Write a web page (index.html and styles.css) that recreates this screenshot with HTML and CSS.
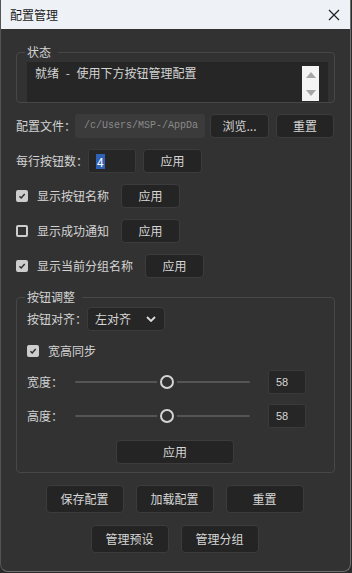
FILE: index.html
```html
<!DOCTYPE html>
<html lang="zh-CN">
<head>
<meta charset="utf-8">
<title>配置管理</title>
<link rel="stylesheet" href="styles.css">
</head>
<body>
<div class="window">
  <div class="titlebar">
    <span class="title">配置管理</span>
    <svg class="close" width="12" height="12" viewBox="0 0 12 12"><path d="M1 1L11 11M11 1L1 11" stroke="#1f1f1f" stroke-width="1.2" fill="none"/></svg>
  </div>
  <div class="content">
    <fieldset class="group group-status">
      <legend>状态</legend>
      <div class="textarea">
        <div class="textarea-text">就绪 - 使用下方按钮管理配置</div>
        <div class="vscroll">
          <svg width="10" height="6" viewBox="0 0 10 6"><path d="M0 6L5 0L10 6Z" fill="#a6a6a6"/></svg>
          <svg width="10" height="6" viewBox="0 0 10 6"><path d="M0 0L5 6L10 0Z" fill="#a6a6a6"/></svg>
        </div>
      </div>
    </fieldset>

    <div class="row row-file">
      <span class="label label-file">配置文件：</span>
      <div class="path-input">/c/Users/MSP-/AppDa</div>
      <button class="btn btn-browse">浏览...</button>
      <button class="btn btn-reset">重置</button>
    </div>

    <div class="row">
      <span class="label label-count">每行按钮数：</span>
      <div class="spin-input"><span class="sel">4</span></div>
      <button class="btn btn-apply">应用</button>
    </div>

    <div class="row">
      <span class="check checked"><svg width="10" height="10" viewBox="0 0 10 10"><path d="M1.8 5.2L4 7.4L8.4 2.6" stroke="#2e2e2e" stroke-width="1.8" fill="none"/></svg></span>
      <span class="label check-label w6">显示按钮名称</span>
      <button class="btn btn-apply">应用</button>
    </div>

    <div class="row">
      <span class="check"></span>
      <span class="label check-label w6">显示成功通知</span>
      <button class="btn btn-apply">应用</button>
    </div>

    <div class="row">
      <span class="check checked"><svg width="10" height="10" viewBox="0 0 10 10"><path d="M1.8 5.2L4 7.4L8.4 2.6" stroke="#2e2e2e" stroke-width="1.8" fill="none"/></svg></span>
      <span class="label check-label w8">显示当前分组名称</span>
      <button class="btn btn-apply">应用</button>
    </div>

    <fieldset class="group group-adjust">
      <legend>按钮调整</legend>
      <div class="row-inner">
        <span class="label label-align">按钮对齐：</span>
        <div class="combo">
          <span>左对齐</span>
          <svg width="10" height="6" viewBox="0 0 10 6"><path d="M1 1L5 5L9 1" stroke="#dcdcdc" stroke-width="1.8" fill="none"/></svg>
        </div>
      </div>
      <div class="row-inner row-sync">
        <span class="check checked"><svg width="10" height="10" viewBox="0 0 10 10"><path d="M1.8 5.2L4 7.4L8.4 2.6" stroke="#2e2e2e" stroke-width="1.8" fill="none"/></svg></span>
        <span class="label check-label">宽高同步</span>
      </div>
      <div class="row-inner row-slider">
        <span class="label label-dim">宽度：</span>
        <div class="slider">
          <div class="track"></div>
          <span class="handle"></span>
        </div>
        <div class="spin-small">58</div>
      </div>
      <div class="row-inner row-slider row-slider2">
        <span class="label label-dim">高度：</span>
        <div class="slider">
          <div class="track"></div>
          <span class="handle"></span>
        </div>
        <div class="spin-small">58</div>
      </div>
      <button class="btn btn-wide">应用</button>
    </fieldset>

    <div class="actions">
      <button class="btn btn-action">保存配置</button>
      <button class="btn btn-action">加载配置</button>
      <button class="btn btn-action">重置</button>
    </div>
    <div class="actions actions2">
      <button class="btn btn-action">管理预设</button>
      <button class="btn btn-action">管理分组</button>
    </div>
  </div>
</div>
</body>
</html>
```

FILE: styles.css
```css
* { box-sizing: border-box; }
html, body { margin: 0; padding: 0; }
body {
  background: #2b2b2b;
  width: 352px;
  height: 573px;
  overflow: hidden;
  font-family: "Noto Sans CJK SC", "Liberation Sans", sans-serif;
  font-size: 12px;
  line-height: 16px;
  color: #d2d2d2;
}
.window {
  width: 351px;
  height: 572px;
  background: #323232;
  border: 1px solid #6e6e6e;
  border-top: none;
  border-left-color: #555;
  border-radius: 0 0 8px 8px;
  overflow: hidden;
}
.titlebar {
  height: 29px;
  background: #eef1f6;
  display: flex;
  align-items: center;
  justify-content: space-between;
  padding: 0 10px 0 9px;
}
.title {
  color: #1b1b1b;
  font-size: 12px;
}
.close { margin-top: 1px; }

.content {
  display: flex;
  flex-direction: column;
  padding-top: 15px;
}

.group {
  margin: 0 0 0 15px;
  width: 319px;
  border: 1px solid #474747;
  border-radius: 4px;
  padding: 2px 6px 0 10px;
  min-inline-size: 0;
}
.group-adjust { margin-top: 11px; }
.group legend {
  padding: 0 7px 0 2px;
  margin-left: -2px;
  line-height: 16px;
  color: #d2d2d2;
}
.textarea {
  height: 40px;
  background: #262626;
  display: flex;
}
.textarea-text {
  flex: 1;
  padding: 3px 0 0 8px;
  color: #d4d4d4;
  word-spacing: 4px;
}
.vscroll {
  width: 17px;
  margin: 4px 9px 1px 0;
  background: #f4f4f4;
  display: flex;
  flex-direction: column;
  align-items: center;
  justify-content: space-between;
  padding: 6px 0 5px;
}

.row {
  display: flex;
  align-items: center;
  height: 24px;
  margin: 11px 0 0 15px;
}
.label { white-space: nowrap; }
.label-file { width: 59px; }
.label-count { width: 72px; }

.path-input {
  width: 130px;
  height: 24px;
  background: #3b3b3b;
  border-radius: 3px;
  color: #8a8a8a;
  font-family: "Liberation Mono", monospace;
  font-size: 10px;
  line-height: 24px;
  padding-left: 9px;
  white-space: nowrap;
  overflow: hidden;
}

.btn {
  font-family: "Noto Sans CJK SC", "Liberation Sans", sans-serif;
  font-size: 12px;
  line-height: 16px;
  color: #d6d6d6;
  background: #242424;
  border: 1px solid #3c3c3c;
  border-radius: 4px;
  height: 24px;
  padding: 0;
  margin: 0;
}
.btn-browse { width: 59px; margin-left: 5px; }
.btn-reset { width: 58px; margin-left: 7px; }
.btn-apply { width: 59px; margin-left: 12px; }

.spin-input {
  width: 48px;
  height: 24px;
  background: #262626;
  border: 1px solid #3a3a3a;
  border-radius: 3px;
  padding-left: 7px;
  display: flex;
  align-items: center;
}
.sel {
  background: #2f62b4;
  color: #fff;
  line-height: 15px;
  padding: 0 1px;
}
.row .spin-input + .btn-apply { margin-left: 7px; }

.check {
  width: 12px;
  height: 12px;
  border-radius: 2px;
  border: 2px solid #cdcdcd;
  display: flex;
  align-items: center;
  justify-content: center;
  flex-shrink: 0;
}
.check.checked {
  background: #cdcdcd;
}
.check-label { margin-left: 9px; }
.w6 { width: 72px; }
.w8 { width: 96px; }

.row-inner {
  display: flex;
  align-items: center;
  height: 24px;
}
.label-align { width: 60px; }
.combo {
  width: 78px;
  height: 24px;
  background: #262626;
  border: 1px solid #3c3c3c;
  border-radius: 4px;
  display: flex;
  align-items: center;
  justify-content: space-between;
  padding: 0 8px 0 7px;
  color: #d6d6d6;
}
.row-sync {
  height: 20px;
  margin-top: 10px;
}
.row-slider { margin-top: 9px; }
.row-slider2 { margin-top: 10px; }
.label-dim { width: 48px; }
.slider {
  position: relative;
  width: 175px;
  height: 24px;
  display: flex;
  align-items: center;
}
.track {
  width: 100%;
  height: 2px;
  background: #555;
  border-radius: 1px;
}
.handle {
  position: absolute;
  left: 85px;
  top: 5px;
  width: 14px;
  height: 14px;
  border-radius: 50%;
  border: 2px solid #d4d4d4;
  background: #323232;
  box-shadow: 0 0 0 3px #323232;
}
.spin-small {
  width: 38px;
  height: 24px;
  margin-left: 18px;
  background: #262626;
  border: 1px solid #3a3a3a;
  border-radius: 3px;
  font-family: "Liberation Sans", sans-serif;
  font-size: 11px;
  line-height: 22px;
  padding-left: 7px;
  color: #d6d6d6;
}
.btn-wide {
  display: block;
  width: 118px;
  margin: 12px 0 8px 89px;
}

.actions {
  display: flex;
  justify-content: center;
  gap: 12px;
  margin-top: 12px;
  padding-right: 2px;
}
.btn-action {
  width: 78px;
  height: 28px;
}
```
